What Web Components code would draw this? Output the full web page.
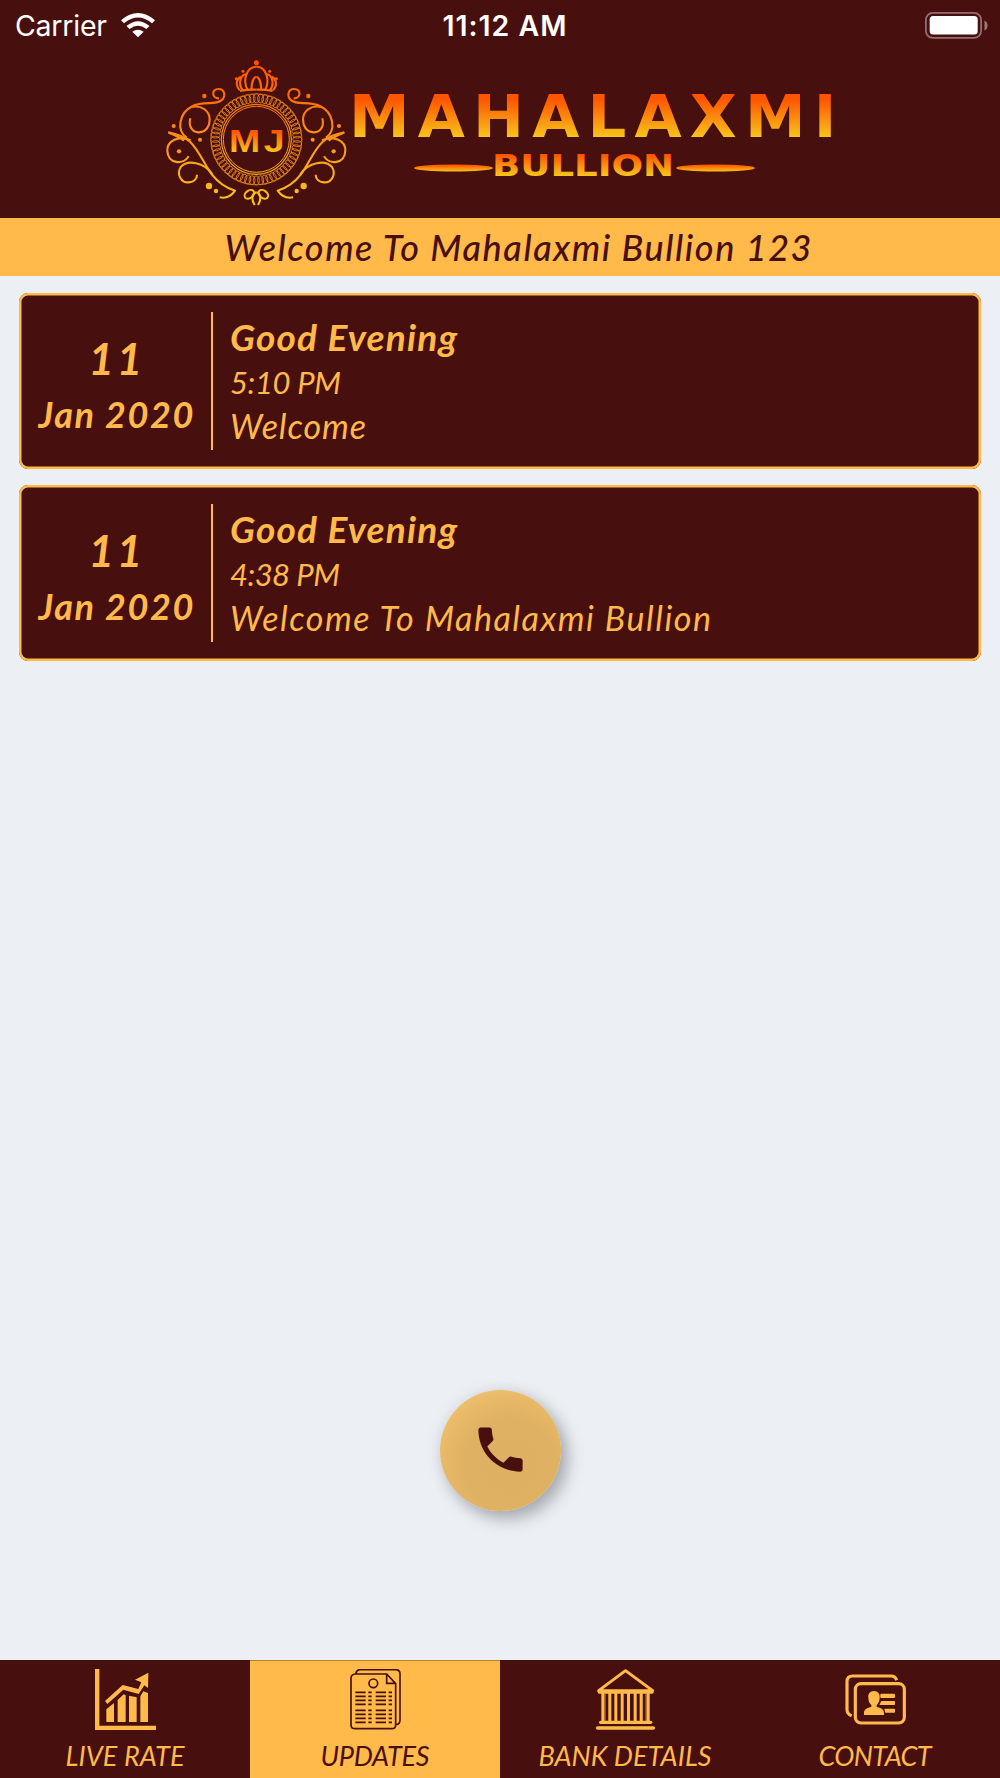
<!DOCTYPE html>
<html lang="en">
<head>
<meta charset="utf-8">
<title>Mahalaxmi Bullion</title>
<style>
  html, body { margin: 0; height: 100%; }
  body { --maroon: #47100f; --gold: #ffba4a; --page: #ecf0f5; background: var(--page);
    font-family: Lato, "Open Sans", sans-serif; }
</style>
</head>
<body>
<bullion-app>
  <status-bar slot="top" carrier="Carrier" time="11:12 AM"></status-bar>
  <brand-logo slot="top"></brand-logo>
  <ticker-bar slot="ticker"><fit-text width="587">Welcome To Mahalaxmi Bullion 123</fit-text></ticker-bar>
  <update-card day="11" month="Jan 2020">
    <fit-text slot="title" width="227">Good Evening</fit-text>
    <fit-text slot="time" width="111">5:10 PM</fit-text>
    <fit-text slot="message" width="136">Welcome</fit-text>
  </update-card>
  <update-card day="11" month="Jan 2020">
    <fit-text slot="title" width="227">Good Evening</fit-text>
    <fit-text slot="time" width="110">4:38 PM</fit-text>
    <fit-text slot="message" width="481">Welcome To Mahalaxmi Bullion</fit-text>
  </update-card>
  <call-button slot="call"></call-button>
  <tab-bar slot="tabs">
    <tab-item icon="rate"><fit-text width="119">LIVE RATE</fit-text></tab-item>
    <tab-item icon="updates" active><fit-text width="109">UPDATES</fit-text></tab-item>
    <tab-item icon="bank"><fit-text width="173">BANK DETAILS</fit-text></tab-item>
    <tab-item icon="contact"><fit-text width="113">CONTACT</fit-text></tab-item>
  </tab-bar>
</bullion-app>

<script>
(function () {
  const define = (name, html, setup) => {
    customElements.define(name, class extends HTMLElement {
      connectedCallback() {
        if (this.shadowRoot) return;
        this.attachShadow({ mode: 'open' }).innerHTML = typeof html === 'function' ? html(this) : html;
        if (setup) setup(this, this.shadowRoot);
      }
    });
  };

  const ICONS = {
    rate: `<svg viewBox="285 57 183 183"><g fill="currentColor">
      <path d="M285 57h13v170h170v13H285z"/>
      <path d="M319 178l23-19v57h-23zM353 150l18-17 6 3v80h-24zM387 137l23 5v74h-23zM421 139l9-15 14 5v87h-23z"/>
      <path d="M405 89l40-21-1 46-11-8-17 26-46-13-48 43-7-9 53-48 47 12 9-20z"/></g></svg>`,
    updates: `<svg viewBox="1035 57 183 183"><g fill="none" stroke="currentColor" stroke-width="5">
      <path d="M1160 72h-94q-13 1-13 13v139q0 12 13 12h109q12 0 12-12V101zM1160 72v28h27M1067 71q3-11 12-12h108q13 0 13 13v137q0 14-12 15"/>
      <path d="M1163 76l22 23" stroke-width="3"/><circle cx="1120" cy="100" r="13"/></g>
      <g fill="none" stroke="currentColor" stroke-width="5.5">
      <path d="M1066 127h31m8 0h10m12 0h31m8 0h10M1066 139h31m8 0h10m12 0h31m8 0h10M1066 151h31m8 0h10m12 0h31m8 0h10M1066 163h31m8 0h10m12 0h31m8 0h10"/>
      <path d="M1066 181h31m8 0h10m12 0h31m8 0h10M1066 193h31m8 0h10m12 0h31m8 0h10M1066 205h31m8 0h10m12 0h31m8 0h10M1066 217h31m8 0h10m12 0h31m8 0h10"/></g></svg>`,
    bank: `<svg viewBox="284 57 183 183"><g fill="none" stroke="currentColor" stroke-linecap="round" stroke-linejoin="round">
      <path d="M295 122L375.500 62 457 122z" stroke-width="9"/><path d="M297 127h158" stroke-width="9"/>
      <path d="M301 217h150" stroke-width="10"/><path d="M292 234h167" stroke-width="11"/></g>
      <path d="M303 128h9v86h-9zM324 128h9v86h-9zM342 128h9v86h-9zM361 128h9v86h-9zM380 128h9v86h-9zM400 128h9v86h-9zM418 128h9v86h-9zM439 128h9v86h-9z" fill="currentColor"/>
      <path d="M314 132v82M327.500 132v82M346 132v82M365 132v82M385 132v82M405 132v82M424 132v82M437 132v82" stroke="currentColor" stroke-width="4" opacity=".55"/></svg>`,
    contact: `<svg viewBox="1035 57 183 183"><g fill="none" stroke="currentColor" stroke-width="9.500">
      <rect x="1066" y="101" width="147" height="118" rx="17"/>
      <path d="M1190 91q-4-13-17-13h-115q-17 0-17 17v84q0 13 14 18"/></g>
      <g fill="currentColor"><path d="M1122 123c12 0 18 9 17 20 0 10-4 17-9 22v5c8 4 22 4 22 19v6h-60v-6c0-15 14-15 22-19v-5c-6-5-9-12-9-22-2-11 5-20 17-20z"/>
      <rect x="1141" y="131" width="44" height="13" rx="3"/><path d="M1144 153h39q2 0 2 3v6q0 3-2 3h-45z"/><path d="M1153 176h30q2 0 2 3v6q0 3-2 3h-27z"/></g></svg>`
  };

  /* <fit-text width="px"> — one line of text, tracked out so it fills the given width */
  define('fit-text', `
<style>
  :host { display: block; white-space: nowrap; }
  span { display: inline-block; }
</style>
<span><slot></slot></span>`, (host, root) => {
    const span = root.querySelector('span');
    const want = parseFloat(host.getAttribute('width'));
    const fit = () => {
      span.style.letterSpacing = '0px';
      span.style.marginRight = '0px';
      const gaps = host.textContent.trim().length - 1;
      const ls = (want - span.getBoundingClientRect().width) / gaps;
      span.style.letterSpacing = ls + 'px';
      span.style.marginRight = -ls + 'px';
    };
    requestAnimationFrame(fit);
    fit();
  });

  define('bullion-app', `
<style>
  :host { display: flex; flex-direction: column; width: 1000px; height: 1778px; background: var(--page); overflow: hidden; }
  header { height: 217.500px; background: var(--maroon); display: flex; flex-direction: column; }
  main { flex: 1; display: flex; flex-direction: column; gap: 16px; padding: 17px 19.400px 0; }
  .call { display: flex; justify-content: center; padding-bottom: 149.500px; }
</style>
<header><slot name="top"></slot></header>
<slot name="ticker"></slot>
<main><slot></slot></main>
<div class="call"><slot name="call"></slot></div>
<slot name="tabs"></slot>`);

  define('status-bar', (el) => `
<style>
  :host { display: grid; grid-template-columns: 1fr auto 1fr; align-items: center; height: 50px; padding: 0 12px 0 15px;
    box-sizing: border-box; color: #fff; font: 400 28.500px/51px Inter, sans-serif; }
  .left { display: flex; align-items: center; gap: 14px; }
  .time { font-weight: 600; margin-left: 6px; }
  .right { display: flex; justify-content: flex-end; }
  svg { display: block; }
</style>
<div class="left"><fit-text width="92">${el.getAttribute('carrier')}</fit-text>
  <svg width="34" height="25" viewBox="0 0 34 25"><g fill="#fff">
    <path d="M0 7.200Q17-7.200 34 7.200L31 10.300Q17-1.300 3 10.300z"/>
    <path d="M5.500 13Q17 3.600 28.500 13L25.400 16Q17 9.500 8.600 16z"/>
    <path d="M11.300 18.700Q17 14.700 22.700 18.700L17 24.300z"/></g></svg></div>
<fit-text class="time" width="124">${el.getAttribute('time')}</fit-text>
<div class="right"><svg width="63" height="27" viewBox="0 0 63 27">
  <rect x=".9" y=".9" width="55.200" height="25" rx="7" fill="none" stroke="#fff" stroke-opacity=".4" stroke-width="1.800"/>
  <rect x="4.700" y="4" width="48" height="18.600" rx="3.500" fill="#fff"/>
  <path d="M59.500 8.500q3 1.500 3 5t-3 5z" fill="#fff" fill-opacity=".45"/></svg></div>`);

  define('brand-logo', () => {
    // rope of narrow links round the monogram
    let links = '';
    for (let i = 0; i < 60; i++) {
      links += `<ellipse cx="289" cy="145" rx="9" ry="13" transform="rotate(${i * 6} 289 268)"/>`;
    }
    return `
<style>
  :host { display: flex; justify-content: center; }
  svg { display: block; }
  text { font-family: "DejaVu Sans", sans-serif; font-weight: 700; }
  .mono { font-family: "Liberation Sans", sans-serif; letter-spacing: 3px; }
  .name { letter-spacing: 7.800px; }
</style>
<svg width="740" height="165" viewBox="130 50 740 165">
  <defs>
    <linearGradient id="crest" gradientUnits="userSpaceOnUse" x1="0" y1="30" x2="0" y2="465">
      <stop offset="0" stop-color="#ff5000"/><stop offset=".5" stop-color="#fa8f18"/><stop offset="1" stop-color="#fbc51a"/></linearGradient>
    <linearGradient id="name" gradientUnits="userSpaceOnUse" x1="0" y1="-42" x2="0" y2="0">
      <stop offset=".1" stop-color="#ff5500"/><stop offset="1" stop-color="#f7c41c"/></linearGradient>
    <linearGradient id="sub" gradientUnits="userSpaceOnUse" x1="0" y1="-23" x2="0" y2="0">
      <stop offset=".1" stop-color="#ff5500"/><stop offset="1" stop-color="#f7c41c"/></linearGradient>
    <linearGradient id="dash" x1="0" y1="0" x2="0" y2="1">
      <stop offset=".1" stop-color="#ff5500"/><stop offset="1" stop-color="#f7c41c"/></linearGradient>
    <g id="scroll">
      <path d="M177 145C156 146 152 117 176 117 194 117 199 139 184 151 165 166 132 153 98 168 56 189 49 241 80 263"/>
      <path d="M91 205C84 231 99 248 117 247 139 246 149 228 149 209 149 181 124 165 94 171"/>
      <path d="M25 247C50 252 72 259 90 275 119 303 133 344 156 374 173 396 196 413 225 422 211 442 197 446 179 442"/>
      <path d="M25 247C42 256 55 258 72 272M92 271C56 254 21 273 22 302 24 342 70 346 86 319" />
      <path d="M157 373C133 336 82 328 62 351 48 373 64 399 87 397 101 396 111 387 111 374"/>
      <path d="M239 121C225 106 229 86 243 80M250 122C233 105 240 75 259 72M264 122C247 95 257 51 289 50M240 123Q264 118 289 119M274 120C275 96 281 81 289 81"/>
      <ellipse cx="268" cy="433" rx="16" ry="11" transform="rotate(-38 268 433)"/>
      <path d="M289 427C274 431 274 449 284 465"/>
      <g fill="url(#crest)" stroke="none"><circle cx="133" cy="138" r="6.500"/><circle cx="41" cy="228" r="6"/><circle cx="120" cy="269" r="6"/>
      <circle cx="57" cy="304" r="6.500"/><circle cx="147" cy="408" r="9.500"/><circle cx="168" cy="423" r="6.500"/>
      <circle cx="229" cy="86" r="4.500"/><circle cx="249" cy="64" r="4.500"/></g>
    </g>
  </defs>
  <g transform="translate(160 50) scale(.33333)" fill="none" stroke="url(#crest)" stroke-width="6.300" stroke-linejoin="round">
    <use href="#scroll"/><use href="#scroll" transform="translate(578 0) scale(-1 1)"/>
    <circle cx="289" cy="38" r="7.500" fill="url(#crest)" stroke="none"/>
    <circle cx="289" cy="268" r="105" stroke-width="3.500"/><circle cx="289" cy="268" r="99" stroke-width="3"/>
    <circle cx="289" cy="268" r="137" stroke-width="2"/>
  </g>
  <g transform="translate(160 50) scale(.33333)" fill="none" stroke="#f58f20" stroke-width="2.300">${links}</g>
  <text class="mono" transform="translate(229 152) scale(1.170 1)" font-size="32" fill="url(#sub)">MJ</text>
  <text class="name" transform="translate(349 137) scale(1.050 1)" font-size="58" fill="url(#name)">MAHALAXMI</text>
  <text transform="translate(492 175.500)" font-size="30.500" textLength="182" lengthAdjust="spacingAndGlyphs" fill="url(#sub)">BULLION</text>
  <ellipse cx="453.500" cy="168" rx="39.500" ry="3.600" fill="url(#dash)"/>
  <ellipse cx="715.500" cy="168" rx="39.500" ry="3.600" fill="url(#dash)"/>
</svg>`;
  });

  define('ticker-bar', `
<style>
  :host { display: flex; height: 58.500px; box-sizing: border-box; padding-left: 224.500px; background: var(--gold); color: var(--maroon);
    font: italic 500 36px/58px Lato, sans-serif; }
</style>
<slot></slot>`);

  define('update-card', (el) => `
<style>
  :host { display: flex; box-sizing: border-box; height: 176px; padding: 19.300px 0; box-shadow: inset 0 0 0 2.500px var(--gold); border-radius: 9px;
    background: var(--maroon); color: var(--gold); font-style: italic; }
  .date { width: 193.600px; box-sizing: border-box; border-right: 2px solid var(--gold); padding: 18px 0 0 19px; font-weight: 700; }
  .day { font-size: 44px; line-height: 56px; padding-left: 50px; }
  .month { font-size: 36px; line-height: 57px; }
  .text { padding: 2px 0 0 17px; }
  .title { font-size: 37px; line-height: 45px; font-weight: 700; }
  .time { font-size: 31px; line-height: 46px; }
  .message { font-size: 34px; line-height: 41px; }
</style>
<div class="date">
  <fit-text class="day" width="54">${el.getAttribute('day')}</fit-text>
  <fit-text class="month" width="155">${el.getAttribute('month')}</fit-text>
</div>
<div class="text">
  <div class="title"><slot name="title"></slot></div>
  <div class="time"><slot name="time"></slot></div>
  <div class="message"><slot name="message"></slot></div>
</div>`);

  define('call-button', `
<style>
  :host { display: flex; align-items: center; justify-content: center; width: 121px; height: 121px; border-radius: 50%; color: var(--maroon);
    background: radial-gradient(circle at 58% 62%, #dfb061 0, #dfb162 45%, #e8b967 66%, #f5c575 88%);
    box-shadow: 7px 8px 16px rgba(60,60,65,.36), 0 0 16px rgba(90,95,105,.12); }
  svg { margin-bottom: 2px; }
</style>
<svg width="59" height="59" viewBox="0 0 24 24"><path fill="currentColor" d="M6.620 10.790c1.440 2.830 3.760 5.140 6.590 6.590l2.200-2.200c.27-.27.67-.36 1.020-.24 1.120.37 2.330.57 3.570.57.55 0 1 .45 1 1V20c0 .55-.45 1-1 1-9.390 0-17-7.610-17-17 0-.55.45-1 1-1h3.500c.55 0 1 .45 1 1 0 1.250.2 2.450.57 3.570.11.35.03.74-.25 1.020l-2.200 2.200z"/></svg>`);

  define('tab-bar', `
<style>
  :host { display: grid; grid-template-columns: repeat(4, 1fr); height: 118px; background: var(--maroon); }
</style>
<slot></slot>`);

  define('tab-item', (el) => `
<style>
  :host { display: flex; flex-direction: column; align-items: center; box-sizing: border-box; padding-top: 8px; color: var(--gold);
    border-top: 1px solid rgba(40,20,10,.35); font: italic 400 27px/32px Lato, sans-serif; }
  :host([active]) { background: var(--gold); color: var(--maroon); }
  svg { display: block; width: 61px; height: 61px; margin-bottom: 9.500px; }
</style>
${ICONS[el.getAttribute('icon')]}
<slot></slot>`);
})();
</script>
</body>
</html>
